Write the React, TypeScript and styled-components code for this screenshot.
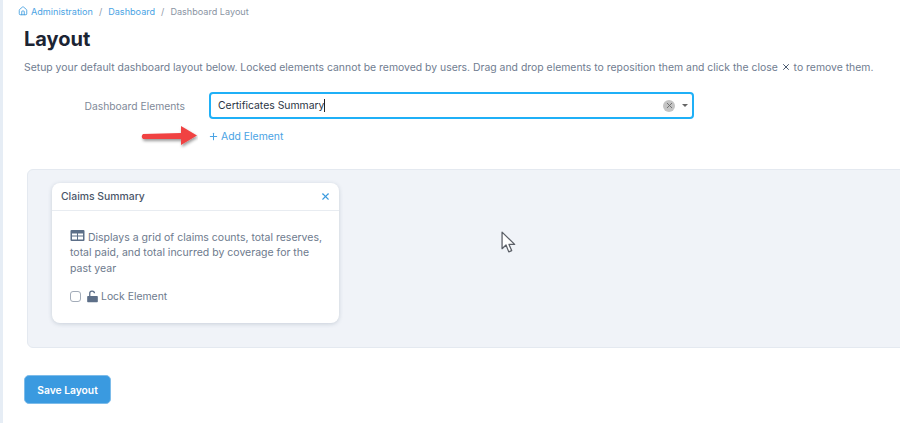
import styled, { createGlobalStyle } from "styled-components";
import { Home, Plus, X } from "lucide-react";

const GlobalStyle = createGlobalStyle`
  html, body {
    margin: 0;
    padding: 0;
    background: #fff;
    overflow: hidden;
  }
  * { box-sizing: border-box; }
`;

const App = () => {
  return (
    <>
      <GlobalStyle />
      <Page>
        <Breadcrumb>
          <Home size={10} strokeWidth={2} color="#3b9ade" />
          <CrumbLink>Administration</CrumbLink>
          <CrumbSep>/</CrumbSep>
          <CrumbLink>Dashboard</CrumbLink>
          <CrumbSep>/</CrumbSep>
          <CrumbCurrent>Dashboard Layout</CrumbCurrent>
        </Breadcrumb>

        <Title>Layout</Title>
        <Description>
          Setup your default dashboard layout below. Locked elements cannot be removed by users. Drag and drop
          elements to reposition them and click the close <X size={10} strokeWidth={2.4} color="#4a5a70" style={{ verticalAlign: "-1px" }} /> to
          remove them.
        </Description>

        <FormRow>
          <FieldLabel>Dashboard Elements</FieldLabel>
          <SelectBox>
            <SelectValue>Certificates Summary</SelectValue>
            <Caret />
            <ClearBtn>
              <X size={9} strokeWidth={2.4} color="#6b6b6b" />
            </ClearBtn>
            <DropArrow />
          </SelectBox>
        </FormRow>

        <AddRow>
          <AddLink>
            <Plus size={11} strokeWidth={2.2} />
            Add Element
          </AddLink>
          <Arrow width="60" height="30" viewBox="0 0 60 30">
            <defs>
              <filter id="arrowShadow" x="-20%" y="-30%" width="140%" height="170%">
                <feDropShadow dx="1" dy="2" stdDeviation="1.4" floodColor="#000" floodOpacity="0.4" />
              </filter>
            </defs>
            <path
              d="M5 11 L 43 10 L 43 3 L 59 12.500 L 43 22 L 43 16 L 5 16 Q 2.500 13.500 5 11 Z"
              fill="#f04343"
              filter="url(#arrowShadow)"
            />
          </Arrow>
        </AddRow>

        <Panel>
          <Card>
            <CardHeader>
              <CardTitle>Claims Summary</CardTitle>
              <X size={11} strokeWidth={2.4} color="#3b9ade" />
            </CardHeader>
            <CardBody>
              <CardText>
                <TableIcon width="15" height="13" viewBox="0 0 15 13">
                  <path
                    fillRule="evenodd"
                    d="M1.500 1h12A1 1 0 0 1 14.500 2v9a1 1 0 0 1-1 1h-12a1 1 0 0 1-1-1V2a1 1 0 0 1 1-1ZM2 4.500V6.500h5V4.500ZM8 4.500V6.500h5V4.500ZM2 7.500V10.500h5V7.500ZM8 7.500V10.500h5V7.500Z"
                    fill="#5d6f88"
                  />
                </TableIcon>{" "}
                Displays a grid of claims counts, total reserves, total paid, and total incurred by coverage for the
                past year
              </CardText>
              <LockRow>
                <Check />
                <svg width="11" height="13" viewBox="0 0 12 13">
                  <path d="M1 6h10a.8.8 0 0 1 .8.8v5.200a.8.8 0 0 1-.8.8H1a.8.8 0 0 1-.8-.8V6.800A.8.8 0 0 1 1 6Z" fill="#5d6f88" />
                  <path d="M3 6V3.500a2.600 2.600 0 0 1 5.200-.6" fill="none" stroke="#5d6f88" strokeWidth="1.400" />
                </svg>
                <LockLabel>Lock Element</LockLabel>
              </LockRow>
            </CardBody>
          </Card>
          <Cursor width="16" height="22" viewBox="0 0 15 20.500">
            <path
              d="M1 1 L1 16.500 L4.700 13 L7.300 19.500 L10 18.300 L7.500 12.500 L12.800 12.500 Z"
              fill="#fff"
              stroke="#5c6068"
              strokeWidth="1.200"
              strokeLinejoin="round"
            />
          </Cursor>
        </Panel>

        <SaveButton>Save Layout</SaveButton>
      </Page>
    </>
  );
};

const Page = styled.div`
  width: 900px;
  height: 423px;
  overflow: hidden;
  border-left: 3px solid #e6edf5;
  padding: 4px 0 0 21px;
  font-family: Inter, "Liberation Sans", sans-serif;
  background: #fff;
`;

const Breadcrumb = styled.div`
  display: flex;
  align-items: center;
  height: 14px;
  margin-left: -6px;
  gap: 3px;
  font-size: 9.100px;
`;

const CrumbLink = styled.span`
  color: #4aa3e4;
`;

const CrumbSep = styled.span`
  color: #8f99a8;
  margin: 0 3px;
`;

const CrumbCurrent = styled.span`
  color: #8a94a3;
`;

const Title = styled.h1`
  margin: 8px 0 0;
  font-size: 20px;
  line-height: 26px;
  font-weight: 700;
  color: #1b2433;
`;

const Description = styled.p`
  margin: 8px 0 0;
  font-size: 10.420px;
  line-height: 16px;
  color: #6f7c90;
  white-space: nowrap;
`;

const FormRow = styled.div`
  display: flex;
  align-items: center;
  margin-top: 16px;
`;

const FieldLabel = styled.label`
  width: 161px;
  text-align: right;
  font-size: 10.300px;
  color: #7f8a99;
`;

const SelectBox = styled.div`
  display: flex;
  align-items: center;
  width: 485px;
  height: 27px;
  margin-left: 24px;
  padding: 0 4px 0 7px;
  border: 2px solid #1fb0f7;
  border-radius: 4px;
`;

const SelectValue = styled.span`
  font-size: 10.400px;
  color: #2a3443;
`;

const Caret = styled.span`
  width: 1px;
  height: 13px;
  background: #222;
`;

const ClearBtn = styled.span`
  display: flex;
  align-items: center;
  justify-content: center;
  width: 12px;
  height: 12px;
  margin-left: auto;
  border-radius: 50%;
  background: #c4c4c4;
`;

const DropArrow = styled.span`
  margin-left: 7px;
  border-left: 3px solid transparent;
  border-right: 3px solid transparent;
  border-top: 3px solid #666;
`;

const AddRow = styled.div`
  position: relative;
  display: flex;
  align-items: center;
  height: 16px;
  margin: 9px 0 0 184px;
`;

const AddLink = styled.a`
  display: inline-flex;
  align-items: center;
  gap: 2px;
  font-size: 10.400px;
  color: #4aa3e4;
`;

const Arrow = styled.svg`
  position: absolute;
  left: -70px;
  top: -5px;
`;

const Panel = styled.div`
  position: relative;
  width: 900px;
  height: 179px;
  margin: 25px 0 0 3px;
  padding: 13px 24px;
  background: #f0f3f8;
  border: 1px solid #e4e9f0;
  border-radius: 6px;
`;

const Card = styled.div`
  width: 287px;
  height: 140px;
  background: #fff;
  border-radius: 8px;
  box-shadow: 0 1px 4px rgba(60, 80, 110, 0.22);
`;

const CardHeader = styled.div`
  display: flex;
  align-items: center;
  justify-content: space-between;
  height: 28px;
  padding: 0 8px 0 9px;
  border-bottom: 1px solid #e8ecf1;
`;

const CardTitle = styled.span`
  font-size: 10.400px;
  font-weight: 500;
  color: #4a5568;
`;

const CardBody = styled.div`
  padding: 18px 10px 0 18px;
`;

const CardText = styled.p`
  margin: 0;
  font-size: 10.500px;
  line-height: 15.500px;
  color: #6d7a8d;
`;

const TableIcon = styled.svg`
  vertical-align: -1.500px;
`;

const LockRow = styled.div`
  display: flex;
  align-items: center;
  margin-top: 14px;
`;

const Check = styled.span`
  width: 11px;
  height: 11px;
  margin-right: 6px;
  background: #fff;
  border: 1px solid #a3acb9;
  border-radius: 3px;
`;

const LockLabel = styled.span`
  margin-left: 3px;
  font-size: 10.400px;
  color: #6d7a8d;
`;

const Cursor = styled.svg`
  position: absolute;
  left: 473px;
  top: 61px;
`;

const SaveButton = styled.button`
  display: block;
  width: 87px;
  height: 29px;
  margin: 27px 0 0;
  padding: 0;
  border: 1px solid #7dbcea;
  border-radius: 5px;
  background: #3a9ae0;
  color: #fff;
  font-family: inherit;
  font-size: 10.300px;
  font-weight: 600;
`;

export default App;
